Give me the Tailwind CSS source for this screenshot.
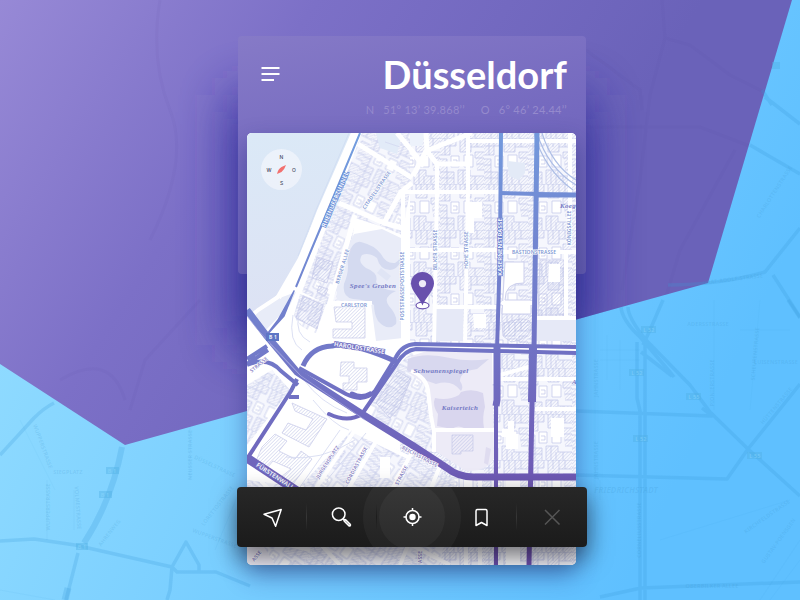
<!DOCTYPE html>
<html lang="de">
<head>
<meta charset="utf-8">
<meta name="viewport" content="width=device-width, initial-scale=1">
<title>Düsseldorf</title>
<script src="https://cdn.jsdelivr.net/npm/@tailwindcss/browser@4"></script>
</head>
<body class="relative min-h-screen overflow-x-hidden bg-[#72ccff] font-['Lato','Open_Sans',sans-serif]">

<!-- Backdrop: faded city map with the violet facet -->
<svg class="absolute inset-0 h-full w-full" viewBox="0 0 800 600" preserveAspectRatio="xMidYMid slice" aria-hidden="true">
  <defs>
    <linearGradient id="sky" gradientUnits="userSpaceOnUse" x1="0" y1="300" x2="620" y2="600">
      <stop offset="0" stop-color="#90dbff"/><stop offset=".5" stop-color="#77cdff"/><stop offset="1" stop-color="#5fc0ff"/>
    </linearGradient>
    <linearGradient id="violet" gradientUnits="userSpaceOnUse" x1="0" y1="0" x2="500" y2="320">
      <stop offset="0" stop-color="#9789d6"/><stop offset=".45" stop-color="#7c70c7"/><stop offset="1" stop-color="#6a62b9"/>
    </linearGradient>
    <clipPath id="facet"><path d="M0 0H792L708 283L125 445L0 364Z"/></clipPath>
    <filter id="soft" filterUnits="userSpaceOnUse" x="100" y="-50" width="620" height="600"><feGaussianBlur stdDeviation="26"/></filter>
  </defs>
  <rect width="800" height="600" fill="url(#sky)"/>
  <path d="M0 0H792L708 283L125 445L0 364Z" fill="url(#violet)"/>
  <g clip-path="url(#facet)">
    <g fill="none" stroke="#4f47a0" stroke-opacity=".06" stroke-width="3">
      <path d="M662 0L665 38L650 95L640 180L622 290M665 38L690 45L730 75L770 95M586 50L640 90L642 110M576 127H700L760 150M735 150L680 250L665 300M160 0Q150 60 170 110T150 240M60 380Q110 350 125 400M130 410L145 360L200 300"/>
    </g>
    <rect x="232" y="95" width="358" height="250" fill="#2f2c9a" opacity=".88" filter="url(#soft)"/>
  </g>
  <g fill="none" stroke="#3c9cd8" stroke-opacity=".24" stroke-width="3.5" stroke-linejoin="round">
    <path d="M0 455L34 418Q44 408 54 403M0 541L34 539L75 545L172 567L177 572H216L250 586M172 567L186 542L199 565V572M172 567L170 590L167 600M78 553L66 600"/>
    <path d="M122 447Q112 500 84 543" stroke-width="6"/>
    <path d="M68 588L65 600" stroke-width="7"/>
    <path d="M663 300L650 330L643 345M621 307Q622 320 640 337L670 372L674 377M628 307Q628 318 646 340L690 385L710 412L748 449L800 496M637 342V398L640 411L640 600M645 342V600M641 352L672 376M576 411L712 416L702 408M576 475L727 479L748 449L800 384M600 597L641 588L800 582M788 300L800 318"/>
    <path d="M668 285Q720 285 765 272L800 228M773 275L800 317M765 97L800 124M750 145L800 174M762 90L772 105"/>
  </g>
  <g fill="none" stroke="#3c9cd8" stroke-opacity=".07">
    <path d="M0 590L55 600M20 420L55 490M47 480V540M74 490V530M190 425V480M215 550L240 490M714 300V410M760 300L750 410M595 310V540M600 350H640M600 360H640M607 335V380M620 340V390M660 540L790 500M760 600L800 540M770 600L800 560M790 330H740M600 500V480"/>
  </g>
  <g fill="#4fb0e4" fill-opacity=".4">
    <rect x="106" y="467" width="13" height="7"/><rect x="99" y="491" width="13" height="7"/><rect x="76" y="543" width="12" height="7"/>
    <rect x="641" y="326" width="15" height="7"/><rect x="629" y="369" width="15" height="7"/><rect x="686" y="393" width="15" height="7"/><rect x="633" y="435" width="15" height="7"/><rect x="747" y="452" width="15" height="7"/><rect x="772" y="62" width="8" height="7"/>
  </g>
  <g class="font-['Noto_Sans',sans-serif] font-semibold tracking-wide" font-size="5.500" fill="#3c93cc" fill-opacity=".2" text-anchor="middle">
    <g fill="#8fdaff" fill-opacity=".5"><text x="112" y="473">B 1</text><text x="105" y="497">B 1</text><text x="82" y="549">B 1</text><text x="649" y="332">L 52</text><text x="637" y="375">L 52</text><text x="694" y="399">L 55</text><text x="641" y="441">L 52</text><text x="755" y="458">L 55</text></g>
    <text transform="translate(41 447) rotate(70)">WUPPERSTRASSE</text>
    <text x="68" y="474">SIEGPLATZ</text>
    <text transform="translate(50 507) rotate(-90)">WUPPERSTRASSE</text>
    <text transform="translate(76 508) rotate(86)">VOLMESTRASSE</text>
    <text transform="translate(111 534) rotate(-52)">AHRENWEG</text>
    <text transform="translate(192 455) rotate(-90)">NEUSSER STRASSE</text>
    <text transform="translate(214 468) rotate(25)">DÜSSELSTRASSE</text>
    <text transform="translate(219 507) rotate(-52)">LORETTOSTRASSE</text>
    <text transform="translate(214 540) rotate(20)">WUPPERSTRASSE</text>
    <text x="708" y="326">ADERSSTRASSE</text>
    <text transform="translate(714 383) rotate(-90)">PIONIERSTRASSE</text>
    <text transform="translate(757 354) rotate(-85)">SCHEURENSTRASSE</text>
    <text x="776" y="364">LUISENSTRASSE</text>
    <text transform="translate(778 407) rotate(-50)">HÜTTENSTRASSE</text>
    <text transform="translate(598 378) rotate(-90)">JAHNSTRASSE</text>
    <text transform="translate(598 460) rotate(-90)">JAHNSTRASSE</text>
    <text transform="translate(641 530) rotate(-90)">CORNELIUSSTRASSE</text>
    <text transform="translate(768 518) rotate(-35)">KIRCHFELDSTRASSE</text>
    <text transform="translate(780 542) rotate(-54)">GUSTAV-POENSGEN</text>
    <text x="712" y="588">OBERBILKER ALLEE</text>
    <text transform="translate(733 281) rotate(-7)">GRAF-ADOLF-STRASSE</text>
    <text transform="translate(776 193) rotate(-57)">CHARLOTTENSTRASSE</text>
    <text x="626" y="493" font-size="8" font-style="italic">FRIEDRICHSTADT</text>
  </g>
</svg>

<main class="relative flex justify-center pt-9 pb-8 pl-6">
  <article class="relative w-full max-w-[350px]">
    <div class="absolute inset-x-px top-0 h-[238px] rounded bg-linear-165 from-[#867ac7] via-[#7469bf] to-[#635bad]"></div>

    <header class="relative flex items-start justify-between pt-4 pr-5 pl-6">
      <button type="button" aria-label="Menü" class="mt-3 text-white">
        <svg class="h-5 w-5" viewBox="0 0 20 20" fill="none" stroke="currentColor" stroke-width="2" aria-hidden="true"><path d="M0.500 4H18.500M0.500 10H18.500M0.500 16H13"/></svg>
      </button>
      <div class="text-right">
        <h1 class="text-[38px] leading-[44px] font-bold text-white">Düsseldorf</h1>
        <p class="flex justify-end gap-4 pt-[6px] pb-4 text-[11px] leading-[15px] tracking-wide text-[#958acd]">
          <span>N&ensp; 51° 13’ 39.868’’</span><span>O&ensp; 6° 46’ 24.44’’</span>
        </p>
      </div>
    </header>

    <div class="relative mr-[11px] ml-[10px] overflow-hidden rounded-[5px] bg-white shadow-[0_10px_24px_rgba(30,40,120,0.45)]">
      <svg class="block w-full" viewBox="247 133 329 432" role="img" aria-label="Stadtplan Düsseldorf">
        <defs>
          <linearGradient id="road" gradientUnits="userSpaceOnUse" x1="330" y1="133" x2="400" y2="550">
            <stop offset="0" stop-color="#739fe0"/><stop offset=".45" stop-color="#727dcb"/><stop offset="1" stop-color="#6d50ae"/>
          </linearGradient>
          <linearGradient id="water" gradientUnits="userSpaceOnUse" x1="260" y1="133" x2="290" y2="320">
            <stop offset="0" stop-color="#dbe9f7"/><stop offset="1" stop-color="#dde2f4"/>
          </linearGradient>
          <pattern id="hatch" width="2.500" height="2.500" patternUnits="userSpaceOnUse" patternTransform="rotate(45)">
            <path d="M0 0V2.500" stroke="#b4b9e2" stroke-width=".8"/>
          </pattern>
          <pattern id="houses" width="44" height="46" patternUnits="userSpaceOnUse">
            <rect width="44" height="46" fill="#f5f6fd"/>
            <path d="M0 0H16V8H10V17H0ZM20 0H44V9H31V14H20ZM0 21H7V34H14V46H0ZM18 32H30V38H44V46H18ZM35 14H44V32H37Z" fill="url(#hatch)"/>
            <path d="M11 18H19V29H11ZM24 17H33V29H24Z" fill="#fff"/>
            <path d="M0 0H44M0 8H10V17H0M5 0V17M10 0V8H16V0M20 0V14H31V9H44M25 0V9M31 0V9M37 0V9M0 21H7V34H14V46M0 27H7M0 34H7V46M0 40H14M18 46V32H30V38H44M23 32V46M28 38V46M35 38V46M44 14H35V20H44M36 26H44M37 32H44M11 18H19V29H11ZM24 17H33V29H24ZM13 22H17V26H13" fill="none" stroke="#b5bce5" stroke-width=".7"/>
          </pattern>
          <pattern id="housesTilt" href="#houses" patternTransform="rotate(26)"/>
          <pattern id="housesSteep" href="#houses" patternTransform="rotate(35)"/>
        </defs>

        <rect x="247" y="133" width="329" height="432" fill="#fff"/>

        <!-- Built-up quarters -->
        <path d="M362 133H415L412 180L402 235L380 226L355 218L345 300L330 306L302 292Z" fill="url(#housesTilt)"/>
        <path d="M410 133H576V345H410Z" fill="url(#houses)"/>
        <path d="M400 420L448 384H576V565H400Z" fill="url(#houses)"/>
        <path d="M500 354H576V404H500Z" fill="url(#houses)"/>
        <path d="M300 294L326 304L316 333Q298 328 294 315Z" fill="url(#housesTilt)"/>
        <path d="M247 385L272 370L290 390L247 445Z" fill="url(#housesTilt)"/>
        <path d="M352 430L415 458L455 480L440 565H247V480L300 487Z" fill="url(#housesSteep)"/>
        <path d="M364 415L397 366L412 352L427 385L431 415L434 450L418 447Z" fill="url(#housesTilt)"/>
        <rect x="247" y="133" width="329" height="432" fill="#fff" opacity=".15"/>

        <!-- River and promenade -->
        <path d="M247 133H352L318 210L298 258L276 296L258 311L247 321Z" fill="url(#water)"/>
        <path d="M247 318L258 310L277 299L296 292L290 305L263 333L247 315Z" fill="#e8ecf8"/>
        <path d="M353 133L319 211L301 258L279 298M247 320L258 310L278 297" fill="none" stroke="#fff" stroke-width="4"/>
        <path d="M349 133L316 210L298 256" fill="none" stroke="#cfdcf1" stroke-width=".8"/>

        <!-- Parks -->
        <g>
          <path d="M354 234L382 229L403 239V338L376 341L371 303L337 300Q335 270 354 234Z" fill="#e9ecf8"/>
          <path d="M347 258Q352 240 361 242Q374 245 381 254Q386 264 395 263Q403 259 401 247Q404 268 390 270Q380 270 377 258Q369 252 362 255Q357 262 366 268Q379 273 376 282Q380 290 396 291Q382 297 389 306Q398 316 396 324Q388 332 378 321Q374 314 374 305Q368 300 353 299Q342 297 344 284Q350 270 347 258Z" fill="#d4daf0"/>
          <path d="M381 268L391 276L387 281L377 273Z" fill="#e0e5f5"/>
          <path d="M411 356L427 351H492L494 458Q487 472 466 471L434 450L432 417L427 386L409 373Z" fill="#edebf7"/>
          <path d="M408 359Q425 352 450 358Q468 362 489 359L477 369Q460 371 460 381Q464 387 461 391Q452 379 436 384Q415 377 407 370Z" fill="#d8d8ef"/>
          <path d="M461 392Q472 388 483 393L485 407Q482 417 484 428Q478 432 466 429Q458 424 452 429L437 426L438 414Q432 405 435 398Q448 401 459 395Z" fill="#d9d6ee"/>
          <path d="M436 309H463V341H435ZM536 320H576V341H536Z" fill="#e6e9f7"/>
          <path d="M507 161L525 163V173L519 180L509 176Z" fill="#e3eaf7"/>
          <path d="M376 133H402L397 154L380 148Z" fill="#e2ebf8"/>
          <path d="M486 447L491 449L488 465L484 463Z" fill="#dfdcf0"/>
          <path d="M410 133H425L422 146H410Z" fill="#edf2fb"/>
          <path d="M247 550L260 540L275 565H247Z" fill="#f4f2fa"/>
        </g>

        <!-- Single buildings -->
        <g fill="url(#hatch)" stroke="#c5c9e8" stroke-width=".7">
          <path d="M317 257L333 262L327 283L312 278ZM319 286L328 289L325 296L317 292Z"/>
          <path d="M334 307H365V338H333V329H352V322H336ZM303 296L323 305L317 329L296 318Z"/>
          <path d="M341 362H354V368H367V382H357V390H343V383H349V376H340Z"/>
          <path d="M292 403L327 419L309 447L282 433L288 423L306 430L313 419L295 411Z"/>
          <path d="M262 447L275 434L287 441L279 451L295 459L301 451L312 459L293 484L281 477L291 469L273 461L267 468L256 461Z"/>
          <path d="M452 435H473V451H461V454H452Z"/>
          <path d="M502 324Q530 313 532 326Q530 340 511 342L503 336Z"/>
          <path d="M540 260H564V315H538Z"/>
          <path d="M376 403L397 371L411 379L399 408L390 418Z"/>
        </g>
        <path d="M505 262H524V283Q505 282 505 300H531V314H502Z" fill="#fff" stroke="#cdd0ed"/>
        <path d="M508 421H514V434H518V449H506V437H502V429H508ZM468 202H482V218H474V233H466ZM473 314H486V328H474ZM549 264H560V282H548ZM551 418H564V437H551ZM380 457H390V478H380Z" fill="#fff"/>

        <!-- Minor streets -->
        <g fill="none" stroke="#fff" stroke-linejoin="round">
          <path d="M358 144L412 178M413 176L426 151L472 133M426 133L427 151L437 164H468" stroke-width="5"/>
          <path d="M339 203L384 223L401 192L412 183M411 151L424 166M397 133L418 158" stroke-width="5"/>
          <path d="M384 223L402 228M355 215L329 306L317 340" stroke-width="5"/>
          <path d="M403 192V345M437 164V192L434 345M468 133V192L465 345" stroke-width="4"/>
          <path d="M403 192H501M468 141H576M570 133V245M403 250H500M502 252H576M434 307H500M502 303H535M535 318H576M330 303H372M566 252V320" stroke-width="4"/>
          <path d="M411 371Q426 377 428 390L431 416L434 432V452M434 430H495M500 379H576M535 409H576M500 375L532 366" stroke-width="4"/>
          <path d="M355 430L300 512M378 438L330 520M412 452L365 540M440 466L400 565M300 487L450 565M352 430L410 458M466 477V565M260 480L340 565M480 478V565M532 495H576M247 535L310 550" stroke-width="4"/>
          <path d="M513 478V565" stroke-width="14"/>
        </g>
        <g fill="none" stroke="#d3d8f0" stroke-width=".8">
          <path d="M293 315Q288 342 302 350M299 315Q294 334 310 342M304 380Q321 403 347 413M313 400Q334 426 349 430M286 457Q320 462 355 440M247 390L275 374M332 203L303 270M385 142L400 147M340 430L300 487M366 433L327 480"/>
          <path d="M534 133Q544 169 573 190M537 133Q548 168 576 185M542 133Q552 165 576 180" stroke="#aebfe6" stroke-width="1.200"/>
        </g>

        <!-- Main roads -->
        <g fill="none" stroke="url(#road)" stroke-linejoin="round">
          <path d="M360 133L310 253L296 287" stroke-width="2"/>
          <path d="M294 291L284 316L265 337L278 320Z" stroke-width="1.500" fill="url(#road)"/>
          <path d="M247 310L266 335L297 372L362 414L412 445L447 468Q458 477 474 477H576" stroke-width="7"/>
          <path d="M303 366Q311 347 332 346Q350 341 397 362" stroke-width="5"/>
          <path d="M299 368L346 394Q364 403 375 391L396 357Q402 345 415 344L576 347" stroke-width="4"/>
          <path d="M352 394Q362 399 370 394" stroke-width="5" stroke-linecap="round"/>
          <path d="M329 414Q348 423 362 414L397 363Q405 350 416 349L495 351L576 353" stroke-width="4" stroke-linecap="round"/>
          <path d="M247 359L267 346M247 364L268 350M247 365Q268 356 281 371L298 385M297 379L291 391L247 459M289 397H299" stroke-width="4"/>
          <path d="M247 458L297 491" stroke-width="9"/>
          <path d="M501 133L500 250L497 350" stroke-width="4"/>
          <path d="M497 350V398L496 405V565" stroke-width="4"/>
          <path d="M497 347V400L496 406" stroke-width="7"/>
          <path d="M537 133L534 350L532 404L529 565" stroke-width="5"/>
          <path d="M533 347L532 402" stroke-width="8"/>
          <path d="M500 193L576 195" stroke-width="4"/>
          <path d="M537 195H576" stroke-width="5"/>
        </g>
        <path d="M247 316L258 330L301 376L365 420M270 344L300 375" fill="none" stroke="#a3a5de" stroke-width=".7"/>

        <!-- Street names -->
        <g class="font-['Noto_Sans',sans-serif] font-semibold tracking-wide" font-size="5" text-anchor="middle" fill="#7e97d3">
          <g stroke="#fff" stroke-width="1.200" paint-order="stroke">
            <text transform="translate(378 191) rotate(-55)">CITADELLSTRASSE</text>
            <text transform="translate(344 267) rotate(-73)">BERGER ALLEE</text>
            <text x="354" y="307">CARLSTOR</text>
            <text transform="translate(404 286) rotate(-90)">POSTSTRASSEPOSTSTRASSE</text>
            <text transform="translate(437 250) rotate(-90)">BILKER STRASSE</text>
            <text transform="translate(468 250) rotate(-90)">HOHE STRASSE</text>
            <text x="534" y="254">BASTIONSTRASSE</text>
            <text transform="translate(571 228) rotate(-90)">KÖNIGSALLEE</text>
            <g fill="#8984c6">
              <text transform="translate(329 463) rotate(-57)">JÜRGENSPLATZ</text>
              <text transform="translate(358 466) rotate(-62)">CORDIASTRASSE</text>
              <text transform="translate(403 476) rotate(-62)">STRASSE</text>
              <text transform="translate(419 458) rotate(28)">REICHSSTRASSE</text>
              <text transform="translate(260 366) rotate(-40)">STRASSE</text>
              <text transform="translate(422 557) rotate(-90)">ASSE</text>
              <text transform="translate(258 557) rotate(-52)">ASSE</text>
            </g>
          </g>
          <g fill="#fff" stroke="#7775c5" stroke-width="1.600" paint-order="stroke" font-size="6">
            <text transform="translate(337 200) rotate(-67)" stroke="#6b8fd8">RHEINUFERTUNNEL</text>
            <text transform="translate(502 247) rotate(-90)" stroke="#6f84d0">KASERNENSTRASSE</text>
            <text transform="translate(359 350) rotate(9)">HAROLDSTRASSE</text>
            <text transform="translate(274 478) rotate(33)">FÜRSTENWALL</text>
          </g>
          <rect x="266" y="333" width="13" height="8" fill="#5e76c5"/>
          <text x="273" y="339" fill="#fff">B 1</text>
        </g>
        <g class="font-['Liberation_Serif',serif] font-bold tracking-wider italic" font-size="7" text-anchor="middle" fill="#7378c4">
          <text x="373" y="288">Spee's Graben</text>
          <text x="441" y="373">Schwanenspiegel</text>
          <text x="460" y="410">Kaiserteich</text>
          <text x="560" y="208" text-anchor="start">Koeg</text>
          <text x="572" y="384" text-anchor="start">A</text>
        </g>

        <!-- Compass -->
        <circle cx="281.500" cy="169.500" r="20.500" fill="#f0f4fb" fill-opacity=".8"/>
        <path d="M277 174Q278 169 281.500 167L286 165Q284.500 169.500 281.500 172Z" fill="#f2706f"/>
        <g class="font-['Inter',sans-serif] font-medium" font-size="5" text-anchor="middle" fill="#44485c">
          <text x="281.500" y="158.500">N</text><text x="281.500" y="184.500">S</text><text x="269" y="171.500">W</text><text x="294" y="171.500">O</text>
        </g>

        <!-- Position pin -->
        <ellipse cx="422.500" cy="305.500" rx="6.500" ry="3.300" fill="#fff" stroke="#6850ad" stroke-width="1.200"/>
        <path d="M422.500 305.500C420 298 411 291 411 283.500A11.500 11.500 0 0 1 434 283.500C434 291 425 298 422.500 305.500Z" fill="#6850ad"/>
        <circle cx="422.500" cy="283.600" r="3.600" fill="#edeaf7"/>
      </svg>
    </div>

    <div class="relative -mt-[78px] rounded shadow-[0_10px_24px_rgba(10,10,20,0.6)]">
      <nav aria-label="Kartenwerkzeuge" class="relative grid h-[60px] grid-cols-5 overflow-hidden rounded bg-linear-to-b from-[#272727] to-[#1b1b1b] text-white">
        <span class="absolute top-1/2 left-1/2 h-[98px] w-[98px] -translate-1/2 rounded-full bg-white/4"></span>
        <span class="absolute top-1/2 left-1/2 h-[66px] w-[66px] -translate-1/2 rounded-full bg-white/4"></span>
        <button type="button" aria-label="Navigieren" class="relative grid place-items-center">
          <svg class="h-6 w-6" viewBox="0 0 24 24" fill="none" stroke="currentColor" stroke-width="1.500" stroke-linejoin="round" aria-hidden="true"><path d="M4 9.300L21.200 4.500L15.600 21.300L12 13Z"/></svg>
          <span class="absolute inset-y-4 right-0 w-px bg-linear-to-b from-transparent via-white/10 to-transparent"></span>
        </button>
        <button type="button" aria-label="Suchen" class="relative grid place-items-center">
          <svg class="h-6 w-6" viewBox="0 0 24 24" fill="none" stroke="currentColor" stroke-width="1.500" aria-hidden="true"><circle cx="8.700" cy="9.200" r="6.300"/><path d="M13.200 13.700L15 15.500"/><path d="M15 15.500L19.500 20" stroke-width="3.500" stroke-linecap="round"/><path d="M15.200 15.700L19.300 19.800" stroke="#777" stroke-width=".8"/></svg>
          <span class="absolute inset-y-4 right-0 w-px bg-linear-to-b from-transparent via-black/30 to-transparent"></span>
        </button>
        <button type="button" aria-label="Mein Standort" class="relative grid place-items-center">
          <svg class="h-6 w-6" viewBox="0 0 24 24" fill="none" stroke="currentColor" stroke-width="1.500" aria-hidden="true"><circle cx="12.500" cy="12" r="6.500"/><circle cx="12.500" cy="12" r="3.200" fill="currentColor" stroke="none"/><path d="M12.500 3V6M12.500 18V21M3.500 12H6.500M18.500 12H21.500"/></svg>
        </button>
        <button type="button" aria-label="Merken" class="relative grid place-items-center">
          <svg class="h-6 w-6" viewBox="0 0 24 24" fill="none" stroke="currentColor" stroke-width="1.500" stroke-linejoin="round" aria-hidden="true"><path d="M6 20.500V6Q6 4.500 7.500 4.500H15.500Q17 4.500 17 6V20.500L11.500 17.500Z"/></svg>
          <span class="absolute inset-y-4 right-0 w-px bg-linear-to-b from-transparent via-white/10 to-transparent"></span>
        </button>
        <button type="button" aria-label="Schließen" class="relative grid place-items-center text-[#565656]">
          <svg class="h-6 w-6" viewBox="0 0 24 24" fill="none" stroke="currentColor" stroke-width="1.500" aria-hidden="true"><path d="M5 5L19.500 19.500M19.500 5L5 19.500"/></svg>
        </button>
      </nav>
    </div>
  </article>
</main>
</body>
</html>
